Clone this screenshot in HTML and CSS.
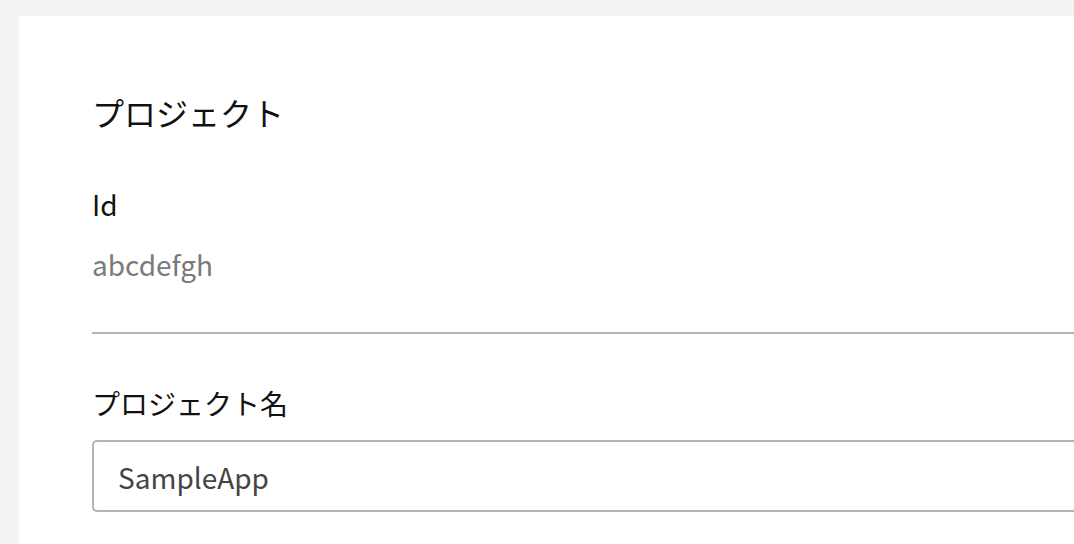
FILE: index.html
```html
<!DOCTYPE html>
<html lang="ja">

<head>
    <meta charset="UTF-8">
    <meta name="viewport" content="width=device-width, initial-scale=1.0">
    <title>プロジェクト</title>
    <link rel="stylesheet" href="styles.css">
</head>

<body>
    <div class="panel">
        <h1 class="panelTitle">プロジェクト</h1>

        <div class="field">
            <p class="fieldLabel">Id</p>
            <p class="fieldValue">abcdefgh</p>
        </div>

        <div class="divider"></div>

        <div class="field">
            <label class="fieldLabel" for="projectName">プロジェクト名</label>
            <input type="text" id="projectName" class="textInput" value="SampleApp">
        </div>
    </div>
</body>

</html>
```

FILE: styles.css
```css
body {
    font-family: 'Noto Sans CJK JP', 'Noto Sans', sans-serif;
    background-color: #f3f3f3;
    color: #111;
    margin: 0;
    height: 100vh;
    overflow: hidden;
}

.panel {
    background-color: #fff;
    margin: 16px 0 0 19px;
    padding: 80px 0 0 73px;
    height: calc(100vh - 16px);
    box-sizing: border-box;
}

.panelTitle {
    font-size: 32px;
    font-weight: normal;
    line-height: 32px;
    margin: 0 0 62px 0;
}

.field {
    display: flex;
    flex-direction: column;
}

.fieldLabel {
    font-size: 28px;
    line-height: 28px;
    margin: 0;
}

.fieldValue {
    font-size: 28px;
    line-height: 28px;
    color: #7a7a7a;
    margin: 32px 0 0 0;
}

.divider {
    height: 2px;
    background-color: #b4b4b6;
    margin: 54px 0 55px 0;
}

.textInput {
    font-family: inherit;
    font-size: 28px;
    color: #444;
    margin-top: 23px;
    height: 72px;
    box-sizing: border-box;
    padding: 2px 24px 0 24px;
    border: 2px solid #b4b4b6;
    border-right: none;
    border-radius: 5px 0 0 5px;
    background-color: #fff;
    outline: none;
}
```
